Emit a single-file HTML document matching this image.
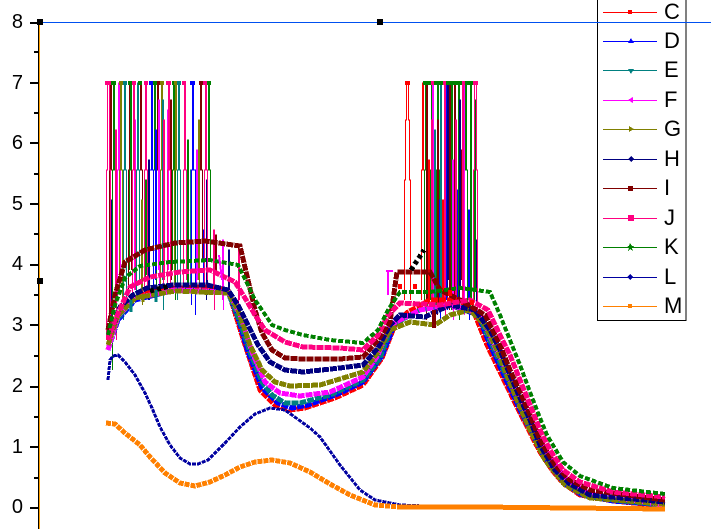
<!DOCTYPE html>
<html>
<head>
<meta charset="utf-8">
<style>
html,body{margin:0;padding:0;background:#fff}
#w{position:relative;width:711px;height:529px;overflow:hidden;background:#fff;font-family:"Liberation Sans",Arial,sans-serif;color:#000}
svg{position:absolute;left:0;top:0}
.y{position:absolute;left:0;width:23px;text-align:right;font-size:20px;line-height:20px;height:20px}
.l{position:absolute;left:664px;font-size:22px;line-height:24px;height:24px}
</style>
</head>
<body>
<div id="w">
<svg width="711" height="529" viewBox="0 0 711 529" shape-rendering="crispEdges" fill="none">
<!-- spikes, left group -->
<g stroke-width="1">
<path stroke="#800000" d="M109.5 330V170h1V83h1V170h1V300M128.5 290V170h1V83h1V170h1V270M139.5 280V170h1V83h1V170h1V270M156.5 285V170h1V83h1V170h1V280M170.5 270V100h1V280M199.5 275V170h1V83h1V170h1V260M215.5 270V235h1V275"/>
<path stroke="#008000" d="M112.5 370V170h1V83h1V170h1V300M129.5 270V170h1V83h1V170h1V290M136.5 300V170h1V83h1V170h1V280M153.5 285V170h1V83h1V170h1V290M172.5 270V170h1V83h1V170h1V300M207.5 285V170h1V83h1V170h1V260M187.5 290V140h1V285M145.5 280V180h1V275"/>
<path stroke="#ff00ff" d="M117.5 300V170h1V83h1V170h1V280M134.5 290V120h1V280M158.5 270V100h1V290M167.5 280V110h1V270M196.5 290V150h1V280M222.5 300V240h1V310"/>
<path stroke="#808000" d="M119.5 290V170h1V83h1V170h1V300M160.5 285V170h1V83h1V170h1V280M174.5 285V170h1V83h1V170h1V290M198.5 280V120h1V285M141.5 300V200h1V305"/>
<path stroke="#008080" d="M123.5 320V170h1V83h1V170h1V300M136.5 300V170h1V83h1V170h1V280M162.5 280V100h1V310M177.5 300V170h1V83h1V170h1V285M190.5 285V170h1V295"/>
<path stroke="#0000ff" d="M149.5 285V170h2V83h1V170h1V290M191.5 305V170h1V83h1V170h2V315M110.5 300V200h1V340M155.5 280V130h1V270M203.5 290V230h1V280"/>
<path stroke="#000080" d="M110.5 340V200h1V300M148.5 300V160h1V300M206.5 300V180h1V295M228.5 290V250h1V295"/>
<path stroke="#ff0080" d="M106.5 340V170h1V83h2V170h1V330M115.5 300V130h1V340M132.5 300V170h1V83h1V170h1V290M144.5 300V170h1V83h1V170h1V290M163.5 290V120h1V280M167.5 285V170h1V83h1V170h1V290M183.5 290V170h1V83h1V170h1V280M204.5 285V170h1V83h1V170h1V280M213.5 290V230h1V310M238.5 310V250h1V300"/>
</g>
<!-- spikes, right group -->
<g stroke-width="1">
<path stroke="#ff0000" d="M404.5 300V180h1V120h1V83h2V120h1V180h1V300M421.5 300V170h1V83h1V170h1V305M428.5 300V160h1V310M442.5 300V200h1V310"/>
<path stroke="#008000" d="M424.5 300V170h1V83h1V170h1V310M430.5 300V170h1V83h1V170h1V300M436.5 310V170h1V83h1V170h1V300M451.5 310V83h1V300M458.5 310V83h1V320M464.5 310V170h1V83h1V170h1V305M470.5 310V83h1V300M474.5 300V100h1V290"/>
<path stroke="#800000" d="M426.5 320V83h1V300M437.5 315V120h1V310M449.5 310V83h1V305M454.5 305V83h1V300M461.5 280V150h1V300"/>
<path stroke="#0000ff" d="M439.5 310V200h1V320M446.5 300V83h1V310M456.5 310V190h1V310M468.5 300V210h1V320"/>
<path stroke="#000080" d="M447.5 290V83h1V280M459.5 300V100h1V290M476.5 305V240h1V305"/>
<path stroke="#ff00ff" d="M432.5 300V83h1V310M452.5 310V160h1V320M463.5 300V83h1V315"/>
<path stroke="#008080" d="M440.5 300V83h1V300M434.5 300V130h1V310"/>
<path stroke="#ff0080" d="M431.5 300V120h1V310M444.5 310V83h1V320M462.5 300V83h1V310M473.5 300V170h1V83h2V170h1V310M455.5 310V120h1V305"/>
</g>
<!-- tops -->
<g stroke-width="4">
<path stroke="#ff0080" d="M105 83H112M131 83H136M144 83H148M166 83H171M182 83H186M203 83H208"/>
<path stroke="#008000" d="M111 83H116M128 83H132M138 83H142M152 83H157M172 83H176M207 83H211M423 83H476"/>
<path stroke="#ff0000" d="M405 83H410"/>
<path stroke="#808000" d="M119 83H123M159 83H164M174 83H178"/>
<path stroke="#008080" d="M123 83H127M177 83H181"/>
<path stroke="#0000ff" d="M149 83H153M190 83H195"/>
<path stroke="#800000" d="M157 83H160M199 83H203"/>
<path stroke="#ff0080" d="M431 83H434M443 83H446M462 83H465M473 83H478"/>
</g>
<!-- main series -->
<g stroke-width="5" stroke-dasharray="7 1">
<path stroke="#ff0000" d="M108 350L115 325L125 305L145 292L175 288L205 287L228 290L235 313L245 345L260 390L275 405L290 410L305 408L335 398L363 385L382 358L395 325L408 312L430 300L460 300L475 315L487 345L500 372L517 407L540 452L552 470L563 483L580 495L613 501L665 506"/>
<path stroke="#0000ff" d="M108 350L118 320L135 300L175 290L228 292L238 318L248 352L262 388L278 403L292 408L308 405L338 394L363 382L382 356L395 323L420 310L450 305L478 315L490 345L520 410L543 455L565 484L582 495L613 501L665 505"/>
<path stroke="#008080" d="M108 350L118 318L135 298L175 290L228 292L240 322L250 352L262 382L272 395L285 403L300 403L330 395L363 380L380 358L392 325L420 310L450 305L478 314L492 345L520 405L545 455L565 482L585 495L613 500L665 505"/>
<path stroke="#ff00ff" d="M108 350L118 316L135 298L175 290L228 292L240 315L252 352L265 382L280 393L300 396L330 392L363 377L378 355L390 325L420 310L450 305L480 314L494 345L522 405L545 450L567 480L590 494L665 505"/>
<path stroke="#808000" d="M108 345L118 315L135 298L175 291L228 293L238 310L250 345L262 370L275 382L290 386L320 385L363 372L378 352L390 330L410 322L435 325L450 315L470 310L485 325L497 350L507 375L517 400L530 430L545 460L565 485L590 498L665 504"/>
<path stroke="#000080" d="M108 340L120 307L133 295L147 288L173 285L207 285L228 290L238 305L248 325L258 345L270 362L285 370L303 372L340 368L363 365L378 348L390 325L400 315L425 317L450 305L475 310L490 330L500 350L510 375L520 398L530 420L540 445L555 470L570 484L590 495L665 502"/>
<path stroke="#800000" d="M108 330L115 295L125 262L145 250L175 243L205 241L240 246L248 280L255 310L262 333L272 350L285 358L303 359L340 359L363 357L378 340L390 322L397 272L430 272L440 290L460 300L485 315L500 345L510 370L520 392L530 415L540 440L555 465L570 480L590 490L665 500"/>
<path stroke="#ff0080" d="M108 340L115 320L130 287L150 277L180 272L210 270L235 282L245 298L255 315L265 330L285 342L303 347L340 348L363 350L378 335L388 315L400 303L440 305L470 300L488 310L500 335L510 355L520 380L530 405L540 430L550 450L563 470L580 482L613 492L665 497"/>
</g>
<path stroke="#008000" stroke-width="4" stroke-dasharray="5 2" d="M108 335L115 305L125 278L140 266L170 262L210 260L238 265L248 285L255 300L262 310L272 325L285 330L303 335L330 340L363 343L378 330L388 310L400 292L430 292L460 288L490 292L500 315L510 340L520 365L530 392L540 418L547 435L563 462L580 476L613 488L665 494"/>
<path stroke="#000" stroke-width="5" stroke-dasharray="4 3" d="M150 291L170 286M411 270L424 250"/>
<path stroke="#ff00ff" stroke-width="2" d="M388 271L388 295M386 271H393M219 255L222 280"/>
<path stroke="#008080" stroke-width="3" d="M131 300V312M156 290V302"/>
<path stroke="#808000" stroke-width="3" d="M143 294V302M206 290V295"/>
<path stroke="#800000" stroke-width="4" d="M434 310V328"/>
<path stroke="#ff0000" stroke-width="4" d="M400 284V289M415 284V289M450 290V296M472 300V305"/>
<!-- L -->
<path stroke="#0000a0" stroke-width="3" stroke-dasharray="4 1" d="M108 380L110 360L113 356L118 355L125 362L135 375L145 393L152 408L160 427L170 445L180 458L190 464L198 464L208 460L225 443L240 427L255 414L270 408L285 410L310 428L320 437L340 465L360 490L375 500L400 505L450 507"/>
<path stroke="#0000ff" stroke-width="2" stroke-dasharray="2 5" d="M450 507L665 509"/>
<!-- M -->
<path stroke="#ff8000" stroke-width="5" stroke-dasharray="5 1" d="M106 423L115 424L125 433L140 445L150 457L165 473L180 483L195 486L210 482L225 475L240 467L255 462L272 460L290 463L310 472L330 484L350 495L375 505L400 507"/>
<path stroke="#ff8000" stroke-width="5" d="M400 507H480L665 509"/>
<!-- axis -->
<path stroke="#000" stroke-width="1" d="M38.5 22V529"/>
<path stroke="#ffa000" stroke-width="1" d="M39.5 22V529"/>
<path stroke="#000" stroke-width="2" d="M30 23H38M30 83H38M30 143H38M30 204H38M30 265H38M30 325H38M30 387H38M30 447H38M30 508H38M34 52H38M34 113H38M34 174H38M34 234H38M34 295H38M34 356H38M34 417H38M34 478H38"/>
<!-- legend -->
<rect x="597.5" y="-5" width="88.5" height="325.5" fill="#fff" stroke="#000" stroke-width="1"/>
<!-- selection line -->
<path stroke="#0050f0" stroke-width="1" d="M40 22.5H711"/>
<!-- handles -->
<rect x="37" y="19" width="6" height="6" fill="#000"/>
<rect x="377" y="19" width="6" height="6" fill="#000"/>
<rect x="37" y="278" width="6" height="6" fill="#000"/>
<!-- legend keys -->
<g stroke-width="1">
<path stroke="#ff0000" d="M603 12.5H657"/><rect x="628" y="10" width="4" height="4" fill="#ff0000"/>
<path stroke="#0000ff" d="M603 41.5H657"/><path fill="#0000ff" d="M628 43L631 38L634 43Z"/>
<path stroke="#008080" d="M603 70.5H657"/><path fill="#008080" d="M628 69H634L631 74Z"/>
<path stroke="#ff00ff" d="M603 100.5H657"/><path fill="#ff00ff" d="M628 100L633 97V103Z"/>
<path stroke="#808000" d="M603 129.5H657"/><path fill="#808000" d="M629 126L634 129L629 132Z"/>
<path stroke="#000080" d="M603 159.5H657"/><path fill="#000080" d="M631 156L634 159L631 162L628 159Z"/>
<path stroke="#800000" d="M603 188.5H657"/><rect x="628" y="186" width="5" height="5" fill="#800000"/>
<path stroke="#ff0080" d="M603 218.5H657"/><rect x="628" y="215" width="6" height="6" fill="#ff0080"/>
<path stroke="#008000" d="M603 247.5H657"/><path fill="#008000" d="M630 243L632 246H634L632 248L633 251L630 249L628 251L629 248L627 246H629Z"/>
<path stroke="#0000a0" d="M603 277.5H657"/><path fill="#0000a0" d="M630 274L633 277L630 280L627 277Z"/>
<path stroke="#ff8000" d="M603 306.5H657"/><rect x="628" y="304" width="4" height="4" fill="#ff8000"/>
</g>
</svg>
<div class="y" style="top:12px">8</div>
<div class="y" style="top:73px">7</div>
<div class="y" style="top:133px">6</div>
<div class="y" style="top:194px">5</div>
<div class="y" style="top:254px">4</div>
<div class="y" style="top:315px">3</div>
<div class="y" style="top:376px">2</div>
<div class="y" style="top:437px">1</div>
<div class="y" style="top:497px">0</div>
<div class="l" style="top:0px">C</div>
<div class="l" style="top:29px">D</div>
<div class="l" style="top:58px">E</div>
<div class="l" style="top:88px">F</div>
<div class="l" style="top:117px">G</div>
<div class="l" style="top:147px">H</div>
<div class="l" style="top:176px">I</div>
<div class="l" style="top:206px">J</div>
<div class="l" style="top:235px">K</div>
<div class="l" style="top:265px">L</div>
<div class="l" style="top:294px">M</div>
</div>
</body>
</html>
